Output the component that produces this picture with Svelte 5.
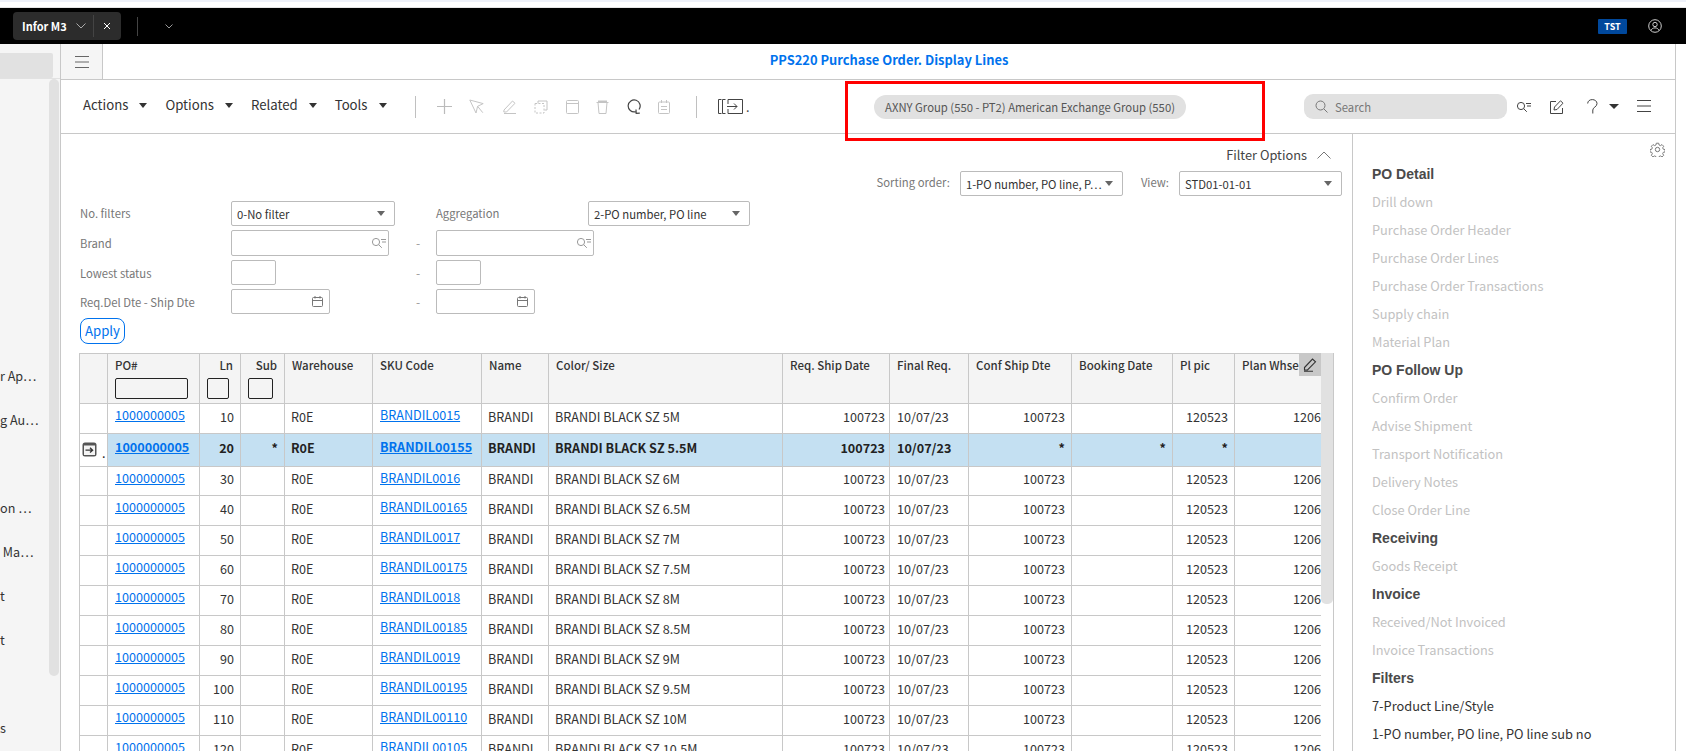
<script>
  const sizes = ['5M','5.5M','6M','6.5M','7M','7.5M','8M','8.5M','9M','9.5M','10M','10.5M'];
  const skus = ['0015','00155','0016','00165','0017','00175','0018','00185','0019','00195','00110','00105'];
  const rows = sizes.map((s, i) => ({ ln: (i + 1) * 10, sku: 'BRANDIL' + skus[i], size: 'BRANDI BLACK SZ ' + s, sel: i === 1, after: i === 2 }));
  const heads = [
    { t: '' }, { t: 'PO#', input: 'po' }, { t: 'Ln', r: true, input: 'ln' }, { t: 'Sub', r: true, input: 'sub' },
    { t: 'Warehouse' }, { t: 'SKU Code' }, { t: 'Name' }, { t: 'Color/ Size' }, { t: 'Req. Ship Date' },
    { t: 'Final Req.' }, { t: 'Conf Ship Dte' }, { t: 'Booking Date' }, { t: 'Pl pic' }, { t: 'Plan Whse' }
  ];
  const widths = [28, 92, 41, 44, 88, 109, 67, 234, 107, 79, 103, 101, 62, 107];
  const side = [
    ['hd','PO Detail'],['dis','Drill down'],['dis','Purchase Order Header'],['dis','Purchase Order Lines'],['dis','Purchase Order Transactions'],['dis','Supply chain'],['dis','Material Plan'],
    ['hd','PO Follow Up'],['dis','Confirm Order'],['dis','Advise Shipment'],['dis','Transport Notification'],['dis','Delivery Notes'],['dis','Close Order Line'],
    ['hd','Receiving'],['dis','Goods Receipt'],['hd','Invoice'],['dis','Received/Not Invoiced'],['dis','Invoice Transactions'],
    ['hd','Filters'],['ena','7-Product Line/Style'],['ena','1-PO number, PO line, PO line sub no']
  ];
  const nav = ['r Ap…','g Au…','','on …',' Ma…','t','t','','s'];
</script>

{#snippet lookup(c)}
  <svg class="ic" width="16" height="12" viewBox="0 0 16 12" fill="none" stroke={c} stroke-width="1"><circle cx="5" cy="5" r="3.6"/><path d="M7.8 7.8l3 3M10 2.5h5M11 5h4"/></svg>
{/snippet}
{#snippet cal()}
  <svg class="ic" width="11" height="11" viewBox="0 0 11 11" fill="none" stroke="#777" stroke-width="1"><rect x=".5" y="1.5" width="10" height="9" rx="1"/><path d="M.5 4.5h10M3 0v2.5M8 0v2.5"/></svg>
{/snippet}
{#snippet ham(c)}
  <svg width="14" height="12" viewBox="0 0 14 12" fill="none" stroke={c} stroke-width="1"><path d="M0 .5h14M0 6h14M0 11.5h14"/></svg>
{/snippet}

<div class="page">
  <div class="strip"></div>
  <header class="top">
    <div class="tab">
      <span class="tabname">Infor M3</span>
      <svg width="10" height="6" viewBox="0 0 10 6" fill="none" stroke="#aaa"><path d="M.5.5L5 5 9.5.5"/></svg>
      <i class="tabsep"></i>
      <svg width="8" height="8" viewBox="0 0 8 8" fill="none" stroke="#fff"><path d="M1 1l6 6M7 1L1 7"/></svg>
    </div>
    <i class="topsep"></i>
    <svg class="topchev" width="8" height="5" viewBox="0 0 8 5" fill="none" stroke="#999"><path d="M.5.5L4 4 7.5.5"/></svg>
    <div class="topright">
      <span class="tst">TST</span>
      <svg width="14" height="14" viewBox="0 0 14 14" fill="none" stroke="#ccc" stroke-width="1"><circle cx="7" cy="7" r="6.3"/><circle cx="7" cy="5.5" r="2.2"/><path d="M3 11.5c.8-2 2.2-2.6 4-2.6s3.2.6 4 2.6"/></svg>
    </div>
  </header>

  <div class="main">
    <aside class="nav">
      <div class="navtop"><div class="navsearch"></div></div>
      <div class="navbody">
        <div class="navlist">
          {#each nav as n}<div class="navitem">{n}</div>{/each}
        </div>
        <div class="navthumb"></div>
      </div>
    </aside>

    <div class="content">
      <div class="titlebar">
        <div class="hamcell">{@render ham('#666')}</div>
        <div class="title">PPS220 Purchase Order. Display Lines</div>
      </div>

      <div class="toolbar">
        <div class="menus">
          {#each ['Actions','Options','Related','Tools'] as m}
            <span class="menu">{m}<i class="tri"></i></span>
          {/each}
        </div>
        <i class="tsep"></i>
        <div class="tools">
          <svg width="15" height="15" viewBox="0 0 15 15" stroke="#bbb" stroke-width="1.2" fill="none"><path d="M7.5 0v15M0 7.5h15"/></svg>
          <svg width="15" height="15" viewBox="0 0 15 15" stroke="#c4c4c4" fill="none"><path d="M.8 1l13.400 3.600-5.600 2.700L7 14z"/><path d="M8.600 7.300l5.200 6.400"/></svg>
          <svg width="15" height="15" viewBox="0 0 15 15" stroke="#c4c4c4" fill="none"><path d="M2 11l8.500-9 2.500 2.300L4.500 13H1.800zM2 14.500h12"/></svg>
          <svg width="14" height="14" viewBox="0 0 14 14" stroke="#c4c4c4" fill="none"><path d="M4 3.500V1h9v9h-2.500"/><rect x="1" y="3.500" width="9" height="9.500" stroke-dasharray="2 1.500"/></svg>
          <svg width="13" height="14" viewBox="0 0 13 14" stroke="#c4c4c4" fill="none"><rect x=".5" y=".5" width="12" height="13" rx="1"/><path d="M.5 3.500h12"/></svg>
          <svg width="13" height="14" viewBox="0 0 13 14" stroke="#c4c4c4" fill="none"><path d="M.5 2.500h12M2 2.500l1 11h7l1-11"/><path d="M2 1.500h9" stroke-width="2"/></svg>
          <svg width="14" height="15" viewBox="0 0 14 15" stroke="#444" stroke-width="1.200" fill="none"><path d="M8.500 12.800A6 6 0 1 1 12 10.500M9 10.500l.2 3.800 3.600-.2"/></svg>
          <svg width="12" height="14" viewBox="0 0 12 14" stroke="#c4c4c4" fill="none"><rect x=".5" y="2" width="11" height="11.500" rx="1"/><path d="M3.500 0v3M8.500 0v3M3 6.500h6M3 9.500h6"/></svg>
        </div>
        <i class="tsep"></i>
        <div class="export">
          <svg width="26" height="15" viewBox="0 0 26 15" stroke="#444" fill="none"><path d="M3.500.5H.5v14h3M7.500.5h-3v14h3M10 5V.5h14.500v14H10V10M9 7.500h10M16 4.500l3 3-3 3"/></svg>
          <span>.</span>
        </div>
        <div class="pill">AXNY Group (550 - PT2) American Exchange Group (550)</div>
        <div class="search">
          <svg width="13" height="13" viewBox="0 0 13 13" fill="none" stroke="#777"><circle cx="5.500" cy="5.500" r="4.500"/><path d="M9 9l3.500 3.500"/></svg>
          <span>Search</span>
        </div>
        <div class="tright">
          <span class="ik">{@render lookup('#444')}</span>
          <svg class="ie" width="14" height="14" viewBox="0 0 14 14" fill="none" stroke="#444"><path d="M6 1.500H.5v12h12V8"/><path d="M4 10l.5-3L10.500.8l2.500 2.400L7 9.500z"/></svg>
          <svg class="iq" width="11" height="15" viewBox="0 0 11 15" fill="none" stroke="#444"><path d="M.7 4.500C.7 2 2.800.6 5.300.6s4.700 1.500 4.700 4c0 3.400-4.200 3.500-4.200 6.400v3.500"/></svg>
          <i class="tri big"></i>
          <span class="ih">{@render ham('#444')}</span>
        </div>
      </div>

      <div class="body">
        <section class="left">
          <div class="fo"><span>Filter Options</span>
            <svg width="14" height="8" viewBox="0 0 14 8" fill="none" stroke="#777"><path d="M.5 7.500L7 1l6.500 6.500"/></svg>
          </div>
          <div class="sortrow">
            <span class="lab first">Sorting order:</span>
            <div class="sel w163"><span class="ell">1-PO number, PO line, P…</span><i class="tri g"></i></div>
            <span class="lab v">View:</span>
            <div class="sel w163"><span>STD01-01-01</span><i class="tri g"></i></div>
          </div>

          <div class="filters">
            <span class="lab up">No. filters</span>
            <div class="sel f1"><span>0-No filter</span><i class="tri g"></i></div>
            <span class="lab agg up">Aggregation</span>
            <div class="sel f5"><span>2-PO number, PO line</span><i class="tri g"></i></div>

            <span class="lab">Brand</span>
            <div class="inp brand">{@render lookup('#999')}</div>
            <span class="dash">-</span>
            <div class="inp brand c4">{@render lookup('#999')}</div>

            <span class="lab">Lowest status</span>
            <div class="inp st"></div>
            <span class="dash">-</span>
            <div class="inp st c4"></div>

            <span class="lab">Req.Del Dte - Ship Dte</span>
            <div class="inp dt">{@render cal()}</div>
            <span class="dash">-</span>
            <div class="inp dt c4">{@render cal()}</div>
          </div>
          <button class="apply">Apply</button>

          <div class="gridwrap">
            <div class="grid">
              <table>
                <colgroup>{#each widths as w}<col style="width:{w}px" />{/each}</colgroup>
                <thead>
                  <tr>
                    {#each heads as h}
                      <th class:r={h.r}>
                        {h.t}
                        {#if h.input}<div class="hin {h.input}"></div>{/if}
                      </th>
                    {/each}
                  </tr>
                </thead>
                <tbody>
                  {#each rows as row}
                    <tr class:sel-row={row.sel} class:after={row.after}>
                      <td class="mark">
                        {#if row.sel}
                          <span class="rowbtn">
                            <svg width="15" height="15" viewBox="0 0 15 15"><rect x=".5" y=".5" width="14" height="14" rx="2.500" fill="#555"/><rect x="2" y="3.500" width="11" height="9.500" fill="#f4f4f4"/><path d="M3.500 8.200h7M8 5.800l2.600 2.400L8 10.600" stroke="#333" stroke-width="1.300" fill="none"/></svg>
                            <span>.</span>
                          </span>
                        {/if}
                      </td>
                      <td class="link"><a href="#po">1000000005</a></td>
                      <td class="n">{row.ln}</td>
                      <td class="n star">{row.sel ? '*' : ''}</td>
                      <td>R0E</td>
                      <td class="link"><a href="#sku">{row.sku}</a></td>
                      <td>BRANDI</td>
                      <td>{row.size}</td>
                      <td class="n wide">100723</td>
                      <td class="date">10/07/23</td>
                      <td class="n star">{row.sel ? '*' : '100723'}</td>
                      <td class="n star">{row.sel ? '*' : ''}</td>
                      <td class="n star">{row.sel ? '*' : '120523'}</td>
                      <td class="n">{row.sel ? '' : '120623'}</td>
                    </tr>
                  {/each}
                </tbody>
              </table>
              <div class="editcell">
                <svg width="15" height="14" viewBox="0 0 15 14" fill="none" stroke="#333" stroke-width="1.100"><path d="M1.500 9.500L9.500 1l3 2.800L4.500 12H1.500zM1 13.300h9"/></svg>
              </div>
            </div>
            <div class="track"><div class="thumb"></div></div>
          </div>
        </section>

        <aside class="right">
          <svg class="gear" width="15" height="15" viewBox="0 0 24 24" fill="none" stroke="#777" stroke-width="1.600"><circle cx="12" cy="12" r="3.500"/><path d="M10 1.500h4l.6 3 2.300 1 2.600-1.700 2.800 2.800-1.700 2.600 1 2.300 3 .6v4l-3 .6-1 2.300 1.700 2.600-2.800 2.800-2.600-1.700-2.300 1-.6 3h-4l-.6-3-2.300-1-2.600 1.700-2.800-2.800 1.700-2.600-1-2.300-3-.6v-4l3-.6 1-2.300-1.700-2.600 2.800-2.800 2.600 1.700 2.300-1z" transform="translate(.5 .5) scale(.96)"/></svg>
          {#each side as [k, t]}
            <div class="si {k}">{t}</div>
          {/each}
        </aside>
      </div>
    </div>
  </div>

  <div class="redbox"></div>
</div>

<style>
  :global(body) { margin: 0; background: #fff; }
  .page { position: relative; width: 1686px; height: 751px; overflow: hidden; font: 12.6px/18px "Noto Sans CJK SC", "Noto Sans", sans-serif; color: #333; }
  i { display: block; font-style: normal; }
  .ic { display: block; }

  .strip { height: 8px; box-sizing: border-box; border-top: 2px solid #eef1f9; border-bottom: 1px solid #e6e6e6; }
  .top { height: 36px; background: #000; display: flex; align-items: center; padding-left: 13px; }
  .tab { width: 108px; height: 28px; box-sizing: border-box; background: #2c2c2c; border-radius: 4px; display: flex; align-items: center; padding-left: 9px; }
  .tabname { color: #fff; font-weight: 700; font-size: 11px; margin-right: 9px; white-space: nowrap; }
  .tabsep { width: 1px; height: 22px; background: #444; margin: 0 9px 0 7px; }
  .topsep { width: 1px; height: 19px; background: #444; margin-left: 16px; }
  .topchev { margin-left: 27px; }
  .topright { margin-left: auto; display: flex; align-items: center; gap: 21px; padding-right: 24px; }
  .tst { width: 29px; height: 15px; background: #00489c; color: #fff; font-size: 9px; line-height: 15px; font-weight: 700; text-align: center; border-radius: 1px; }

  .main { display: flex; height: 707px; }
  .nav { width: 60px; flex: none; background: #f5f5f5; border-right: 1px solid #c8c8c8; display: flex; flex-direction: column; }
  .navtop { height: 44px; box-sizing: border-box; border-bottom: 1px solid #e2e2e2; padding-top: 9px; }
  .navsearch { width: 53px; height: 25px; background: #e1e1e1; border-radius: 0 2px 2px 0; }
  .navbody { display: flex; flex: 1; }
  .navlist { width: 49px; padding-top: 286px; font-size: 12.6px; white-space: pre; overflow: hidden; color: #333; }
  .navitem { height: 44px; line-height: 22px; }
  .navthumb { width: 10px; height: 597px; background: #e1e1e1; border-radius: 5px; }

  .content { width: 1614px; flex: none; border-right: 1px solid #c8c8c8; display: flex; flex-direction: column; }
  .titlebar { height: 36px; box-sizing: border-box; border-bottom: 1px solid #c8c8c8; display: flex; }
  .hamcell { width: 42px; flex: none; box-sizing: border-box; background: #f5f5f5; border-right: 1px solid #c8c8c8; display: flex; align-items: center; justify-content: center; }
  .title { flex: 1; text-align: center; color: #0072ed; font-weight: 700; font-size: 12.9px; line-height: 31px; }

  .toolbar { height: 54px; box-sizing: border-box; border-bottom: 1px solid #c8c8c8; display: flex; align-items: center; padding-left: 22px; }
  .menus { display: flex; width: 332px; padding-bottom: 3px; }
  .menu { display: inline-flex; align-items: center; font-size: 13.2px; color: #333; margin-right: 18px; }
  .tri { width: 0; height: 0; border: 4.5px solid transparent; border-top: 5.5px solid #333; border-bottom: 0; margin-left: 11px; }
  .tri.g { border-top-color: #666; }
  .tri.big { border-width: 5.5px 5px 0; margin: 0; }
  .tsep { width: 1px; height: 22px; background: #c0c0c0; }
  .tools { display: flex; align-items: center; justify-content: space-between; width: 233px; margin: 0 26px 0 21px; }
  .export { display: flex; align-items: center; gap: 2px; margin-left: 21px; width: 156px; color: #444; }
  .pill { height: 24px; width: 312px; flex: none; box-sizing: border-box; background: #e1e1e1; border-radius: 12px; padding: 0 11px; font-size: 11.3px; line-height: 24px; color: #555; white-space: nowrap; }
  .search { width: 203px; height: 25px; flex: none; box-sizing: border-box; margin-left: 118px; background: #e1e1e1; border-radius: 9px; display: flex; align-items: center; gap: 7px; padding-left: 11px; color: #777; font-size: 11.3px; }
  .tright { display: flex; align-items: center; margin-left: 9px; }
  .ik { display: block; }
  .ie { margin-left: 18px; }
  .iq { margin-left: 23px; }
  .tright .big { margin-left: 11px; }
  .ih { display: block; margin-left: 18px; }

  .body { display: flex; flex: 1; min-height: 0; }
  .left { width: 1273px; flex: none; border-right: 1px solid #c8c8c8; padding-left: 18px; }
  .fo { display: flex; align-items: center; justify-content: flex-end; gap: 10px; height: 20px; margin-top: 11px; padding-right: 21px; font-size: 12.8px; color: #444; }
  .sortrow { display: flex; align-items: center; justify-content: flex-end; margin-top: 6px; padding-right: 10px; height: 25px; }
  .lab { color: #777; font-size: 11.3px; white-space: nowrap; }
  .sortrow .lab { padding-bottom: 3px; }
  .lab.up { padding-bottom: 2px; }
  .lab.v { margin: 0 10px 0 18px; }
  .lab.first { margin-right: 10px; }
  .lab.agg { grid-column: 4; }
  .sel { height: 25px; box-sizing: border-box; border: 1px solid #bbb; border-radius: 2px; display: flex; align-items: center; justify-content: space-between; padding: 0 9px 0 5px; font-size: 11.3px; color: #333; white-space: nowrap; overflow: hidden; background: #fff; }
  .sel .tri { flex: none; margin-left: 2px; }
  .w163 { width: 163px; }
  .filters { display: grid; grid-template-columns: 151px 185px 20px 152px 162px; grid-template-rows: 25px 26px 25px 25px; row-gap: 4px; align-items: center; margin-top: 5px; padding-left: 1px; }
  .f1 { width: 164px; }
  .f5 { width: 162px; }
  .inp { height: 100%; box-sizing: border-box; border: 1px solid #bbb; border-radius: 2px; display: flex; align-items: center; justify-content: flex-end; padding-right: 1px; }
  .brand { width: 158px; }
  .st { width: 45px; }
  .dt { width: 99px; padding-right: 6px; }
  .c4 { grid-column: 4 / span 2; }
  .dash { color: #999; font-size: 12px; }
  .apply { display: block; margin: 4px 0 9px 1px; width: 45px; height: 26px; padding: 0; background: #fff; border: 1px solid #0072ed; border-radius: 8px; color: #0072ed; font: 13.2px/22px "Noto Sans CJK SC", "Noto Sans", sans-serif; }
  .gridwrap { display: flex; }
  .grid { position: relative; width: 1242px; height: 400px; overflow: hidden; box-sizing: border-box; border-top: 1px solid #c8c8c8; border-left: 1px solid #c8c8c8; }
  table { table-layout: fixed; width: 1241px; border-collapse: separate; border-spacing: 0; }
  th, td { box-sizing: border-box; border-right: 1px solid #c8c8c8; border-bottom: 1px solid #c8c8c8; padding: 4px 6px 0 6px; text-align: left; vertical-align: top; white-space: nowrap; overflow: visible; font-size: 12.6px; line-height: 18px; font-weight: 400; color: #333; }
  th { height: 50px; background: #f4f4f4; font-size: 11.5px; font-weight: 500; padding-top: 2px; padding-left: 7px; color: #333; }
  th.r { text-align: right; padding-right: 7px; }
  td { height: 30px; }
  .after td { height: 29px; padding-top: 3px; }
  .hin { border: 1px solid #222; border-radius: 2px; height: 21px; box-sizing: border-box; margin-top: 4px; }
  .hin.po { width: 73px; }
  .hin.ln { width: 22px; }
  .hin.sub { width: 25px; }
  td.n { text-align: right; padding-right: 6px; }
  td.wide { padding-right: 4px; }
  td.date { padding-left: 7px; }
  td.link { padding-top: 2px; padding-left: 7px; }
  .after td.link { padding-top: 2px; }
  a { color: #0072ed; text-decoration: underline; }
  .sel-row td { height: 33px; background: #c4e0f2; font-weight: 700; color: #222; padding-top: 5px; }
  .sel-row td.link { padding-top: 4px; }
  .sel-row td.mark { background: #fff; padding: 8px 0 0 2px; }
  .sel-row a { font-weight: 700; }
  .rowbtn { display: flex; align-items: flex-start; gap: 5px; font-weight: 400; line-height: 20px; }
  .rowbtn span { line-height: 18px; padding-top: 2px; }
  .editcell { position: absolute; top: 0; right: 0; width: 22px; height: 22px; background: #c8c8c8; display: flex; align-items: center; justify-content: center; }
  .track { width: 13px; box-sizing: border-box; height: 400px; border-right: 1px solid #c8c8c8; }
  .thumb { height: 251px; background: #e1e1e1; border-radius: 0 0 5px 5px; }

  .right { flex: 1; position: relative; padding: 26px 0 0 19px; }
  .gear { position: absolute; top: 8px; left: 297px; }
  .si { height: 28px; line-height: 28px; font-size: 12.8px; white-space: nowrap; }
  .si.hd { font-family: "Liberation Sans", Arial, sans-serif; font-weight: 700; font-size: 14px; color: #4a4a4a; }
  .si.dis { color: #c2c2c2; }
  .si.ena { color: #333; }

  .redbox { position: absolute; left: 845px; top: 81px; width: 420px; height: 60px; box-sizing: border-box; border: 3px solid #f00; }
</style>
